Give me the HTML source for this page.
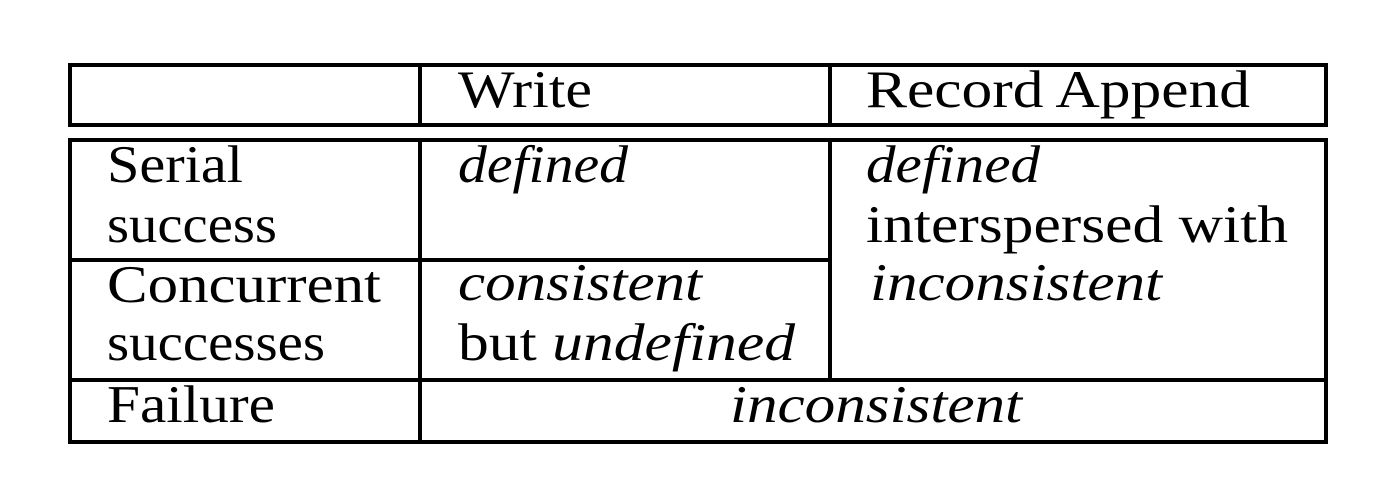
<!DOCTYPE html>
<html><head><style>html,body{margin:0;padding:0;background:#fff}svg{display:block}</style></head>
<body>
<svg width="1400" height="500" viewBox="0 0 1400 500" xmlns="http://www.w3.org/2000/svg" font-family="Liberation Serif, serif" font-size="53" fill="#000">
<rect width="1400" height="500" fill="#fff"/>
<g stroke="#000" stroke-width="4" fill="none">
<rect x="70" y="65" width="1256" height="60"/>
<line x1="420" y1="65" x2="420" y2="125"/>
<line x1="830" y1="65" x2="830" y2="125"/>
<rect x="70" y="140" width="1256" height="302"/>
<line x1="70" y1="380" x2="1326" y2="380"/>
<line x1="70" y1="260" x2="830" y2="260"/>
<line x1="420" y1="140" x2="420" y2="442"/>
<line x1="830" y1="140" x2="830" y2="380"/>
</g>
<g>
<text x="458" y="107" textLength="134" lengthAdjust="spacingAndGlyphs">Write</text>
<text x="866" y="107" textLength="384" lengthAdjust="spacingAndGlyphs">Record Append</text>
<text x="107" y="182" textLength="136" lengthAdjust="spacingAndGlyphs">Serial</text>
<text x="107" y="242" textLength="170" lengthAdjust="spacingAndGlyphs">success</text>
<text x="107" y="302" textLength="274" lengthAdjust="spacingAndGlyphs">Concurrent</text>
<text x="107" y="360" textLength="218" lengthAdjust="spacingAndGlyphs">successes</text>
<text x="107" y="422" textLength="168" lengthAdjust="spacingAndGlyphs">Failure</text>
<text x="458" y="182" font-style="italic" textLength="170" lengthAdjust="spacingAndGlyphs">defined</text>
<text x="458" y="300" font-style="italic" textLength="244" lengthAdjust="spacingAndGlyphs">consistent</text>
<text x="458" y="360" textLength="337" lengthAdjust="spacingAndGlyphs">but <tspan font-style="italic">undefined</tspan></text>
<text x="866" y="182" font-style="italic" textLength="174" lengthAdjust="spacingAndGlyphs">defined</text>
<text x="866" y="242" textLength="422" lengthAdjust="spacingAndGlyphs">interspersed with</text>
<text x="870" y="300" font-style="italic" textLength="292" lengthAdjust="spacingAndGlyphs">inconsistent</text>
<text x="730" y="422" font-style="italic" textLength="292" lengthAdjust="spacingAndGlyphs">inconsistent</text>
</g>
</svg>
</body></html>
